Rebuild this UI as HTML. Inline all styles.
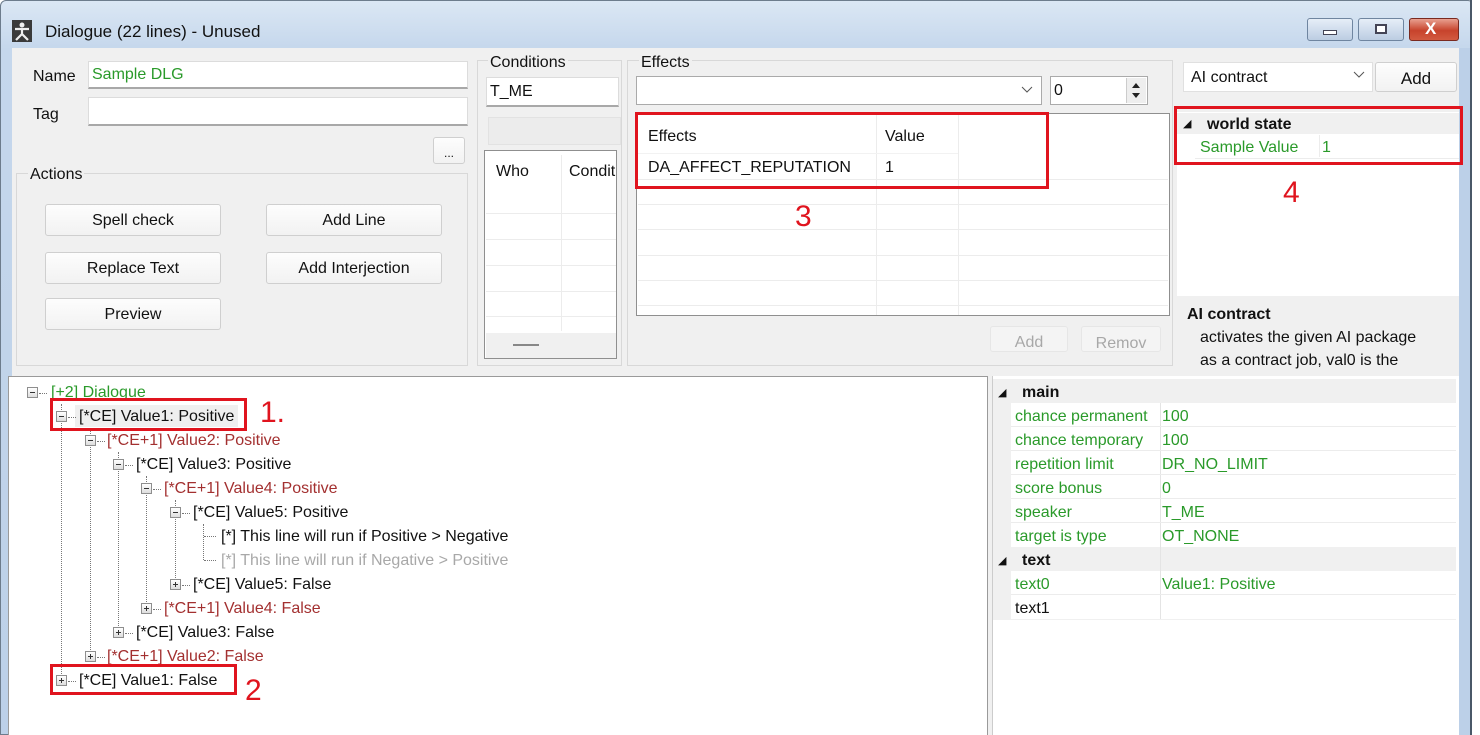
<!DOCTYPE html>
<html><head><meta charset="utf-8"><style>
*{box-sizing:border-box;margin:0;padding:0}
body{width:1480px;height:735px;overflow:hidden;background:#fff;font-family:"Liberation Sans",sans-serif;font-size:16px;color:#111;position:relative}
.a{position:absolute}
.t{position:absolute;white-space:nowrap;line-height:20px}
.tb{position:absolute;background:#fff;border:1px solid #dcdcdc;border-bottom:2px solid #a8a8a8}
.btn{position:absolute;background:linear-gradient(#fdfdfd,#f2f2f2);border:1px solid #cfcfcf;border-radius:3px;text-align:center;line-height:32px;font-size:16px}
.grp{position:absolute;border:1px solid #d8d8d8}
.g{color:#2a9a2a}.r{color:#a33030}.gr{color:#a8a8a8}
.hl{position:absolute;height:1px;background:#ececec}
.vl{position:absolute;width:1px;background:#ececec}
.ex{position:absolute;width:11px;height:11px;border:1px solid #8e8e8e;background:linear-gradient(#fff,#ddd)}
.ex:after{content:"";position:absolute;left:2px;top:4px;width:5px;height:1px;background:#333}
.ex.p:before{content:"";position:absolute;left:4px;top:2px;width:1px;height:5px;background:#333}
.dv{position:absolute;border-left:1px dotted #777;width:0}
.dh{position:absolute;border-top:1px dotted #777;height:0}
.rb{position:absolute;border:3px solid #e0141e}
.num{position:absolute;color:#e0141e;font-size:30px;line-height:30px}
</style></head><body>
<div class="a" style="left:0;top:0;width:1474px;height:735px;background:linear-gradient(#dbe7f4,#c5d7ec 48px,#bcd0e8);border:1px solid #6d7c8c;border-radius:6px 6px 0 0"></div>
<div class="a" style="left:12px;top:20px;width:20px;height:22px;background:#3a3a3a"></div>
<svg class="a" style="left:12px;top:20px" width="20" height="22"><circle cx="10" cy="5" r="2.5" fill="#eee"/><path d="M3 9H17M10 9V14M10 14L4 20M10 14L16 20" stroke="#eee" stroke-width="2.2" fill="none"/></svg>
<div class="t" style="left:45px;top:22px;font-size:17px">Dialogue (22 lines) - Unused</div>
<div class="a" style="left:1307px;top:18px;width:46px;height:23px;border:1px solid #6f85a0;border-radius:3px;background:linear-gradient(#e6eef8,#bccde2)"></div>
<div class="a" style="left:1323px;top:30px;width:14px;height:5px;background:#fff;border:1px solid #445"></div>
<div class="a" style="left:1358px;top:18px;width:46px;height:23px;border:1px solid #6f85a0;border-radius:3px;background:linear-gradient(#e6eef8,#bccde2)"></div>
<div class="a" style="left:1375px;top:24px;width:12px;height:10px;border:2px solid #445;background:#fff"></div>
<div class="a" style="left:1409px;top:18px;width:50px;height:23px;border:1px solid #7a2a20;border-radius:3px;background:linear-gradient(#e8a090,#c7432c 55%,#d25a40)"></div>
<div class="t" style="left:1425px;top:19px;color:#fff;font-weight:bold;font-size:17px">X</div>
<div class="a" style="left:12px;top:48px;width:1447px;height:687px;background:#f0f0f0"></div>
<div class="t" style="left:33px;top:67px">Name</div>
<div class="tb" style="left:88px;top:61px;width:380px;height:28px"></div>
<div class="t g" style="left:92px;top:65px">Sample DLG</div>
<div class="t" style="left:33px;top:105px">Tag</div>
<div class="tb" style="left:88px;top:97px;width:380px;height:29px"></div>
<div class="btn" style="left:433px;top:137px;width:32px;height:27px;line-height:30px;font-size:12px">...</div>
<div class="grp" style="left:16px;top:173px;width:452px;height:193px"></div>
<div class="t" style="left:28px;top:165px;background:#f0f0f0;padding:0 2px">Actions</div>
<div class="btn" style="left:45px;top:204px;width:176px;height:32px">Spell check</div>
<div class="btn" style="left:266px;top:204px;width:176px;height:32px">Add Line</div>
<div class="btn" style="left:45px;top:252px;width:176px;height:32px">Replace Text</div>
<div class="btn" style="left:266px;top:252px;width:176px;height:32px">Add Interjection</div>
<div class="btn" style="left:45px;top:298px;width:176px;height:32px">Preview</div>
<div class="grp" style="left:477px;top:60px;width:145px;height:306px"></div>
<div class="t" style="left:488px;top:53px;background:#f0f0f0;padding:0 2px">Conditions</div>
<div class="tb" style="left:486px;top:77px;width:133px;height:30px"></div>
<div class="t" style="left:490px;top:82px">T_ME</div>
<div class="a" style="left:488px;top:117px;width:133px;height:28px;background:#ececec;border:1px solid #e2e2e2"></div>
<div class="a" style="left:484px;top:150px;width:133px;height:209px;background:#fff;border:1px solid #8f8f8f"></div>
<div class="t" style="left:496px;top:162px">Who</div>
<div class="t" style="left:569px;top:162px">Condit</div>
<div class="vl" style="left:561px;top:155px;height:176px"></div>
<div class="hl" style="left:486px;top:213px;width:130px"></div>
<div class="hl" style="left:486px;top:239px;width:130px"></div>
<div class="hl" style="left:486px;top:265px;width:130px"></div>
<div class="hl" style="left:486px;top:291px;width:130px"></div>
<div class="hl" style="left:486px;top:316px;width:130px"></div>
<div class="a" style="left:486px;top:333px;width:130px;height:25px;background:#f0f0f0"></div>
<div class="a" style="left:513px;top:344px;width:26px;height:2px;background:#888"></div>
<div class="grp" style="left:627px;top:60px;width:546px;height:306px"></div>
<div class="t" style="left:639px;top:53px;background:#f0f0f0;padding:0 2px">Effects</div>
<div class="a" style="left:636px;top:76px;width:406px;height:29px;background:#fff;border:1px solid #aaa"></div>
<svg class="a" style="left:1021px;top:86px" width="12" height="8"><path d="M1 1L6 6L11 1" stroke="#555" fill="none"/></svg>
<div class="a" style="left:1050px;top:76px;width:98px;height:29px;background:#fff;border:1px solid #aaa"></div>
<div class="t" style="left:1054px;top:81px">0</div>
<div class="a" style="left:1126px;top:78px;width:20px;height:25px;background:#eee;border-left:1px solid #ccc"></div>
<svg class="a" style="left:1130px;top:81px" width="12" height="20"><path d="M2 7L6 2L10 7Z M2 12L6 17L10 12Z" fill="#222"/></svg>
<div class="a" style="left:636px;top:113px;width:534px;height:203px;background:#fff;border:1px solid #8f8f8f"></div>
<div class="t" style="left:648px;top:127px">Effects</div>
<div class="t" style="left:885px;top:127px">Value</div>
<div class="t" style="left:648px;top:158px">DA_AFFECT_REPUTATION</div>
<div class="t" style="left:885px;top:158px">1</div>
<div class="vl" style="left:876px;top:115px;height:200px"></div>
<div class="vl" style="left:958px;top:115px;height:200px"></div>
<div class="hl" style="left:638px;top:153px;width:320px;background:#f2f2f2"></div>
<div class="hl" style="left:638px;top:179px;width:530px"></div>
<div class="hl" style="left:638px;top:204px;width:530px"></div>
<div class="hl" style="left:638px;top:229px;width:530px"></div>
<div class="hl" style="left:638px;top:255px;width:530px"></div>
<div class="hl" style="left:638px;top:280px;width:530px"></div>
<div class="hl" style="left:638px;top:305px;width:530px"></div>
<div class="btn" style="left:990px;top:326px;width:78px;height:26px;color:#a8a8a8;border-color:#e6e6e6;background:#f4f4f4;line-height:32px">Add</div>
<div class="btn" style="left:1081px;top:326px;width:80px;height:26px;color:#a8a8a8;border-color:#e6e6e6;background:#f4f4f4;line-height:34px;overflow:hidden">Remov</div>
<div class="a" style="left:1183px;top:62px;width:190px;height:30px;background:#fff;border:1px solid #e0e0e0"></div>
<div class="t" style="left:1191px;top:68px">AI contract</div>
<svg class="a" style="left:1353px;top:71px" width="12" height="8"><path d="M1 1L6 6L11 1" stroke="#555" fill="none"/></svg>
<div class="btn" style="left:1375px;top:62px;width:82px;height:30px;line-height:32px;font-size:17px">Add</div>
<div class="a" style="left:1177px;top:112px;width:283px;height:184px;background:#fff"></div>
<div class="a" style="left:1177px;top:113px;width:283px;height:21px;background:#f0f0f0"></div>
<div class="t" style="left:1183px;top:114px;font-size:11px">◢</div>
<div class="t" style="left:1207px;top:115px;font-weight:bold;font-size:16px">world state</div>
<div class="t g" style="left:1200px;top:138px">Sample Value</div>
<div class="t g" style="left:1322px;top:138px">1</div>
<div class="vl" style="left:1319px;top:135px;height:22px"></div>
<div class="hl" style="left:1195px;top:158px;width:265px"></div>
<div class="t" style="left:1187px;top:305px;font-weight:bold">AI contract</div>
<div class="t" style="left:1200px;top:328px">activates the given AI package</div>
<div class="t" style="left:1200px;top:351px">as a contract job, val0 is the</div>
<div class="a" style="left:8px;top:376px;width:980px;height:359px;background:#fff;border:1px solid #9a9a9a;border-bottom:none"></div>
<div class="a" style="left:992px;top:376px;width:467px;height:359px;background:#fff;border-left:1px solid #ccc"></div>
<div class="dv" style="left:61px;top:404px;height:276px"></div>
<div class="dv" style="left:90px;top:428px;height:228px"></div>
<div class="dv" style="left:118px;top:452px;height:180px"></div>
<div class="dv" style="left:146px;top:476px;height:132px"></div>
<div class="dv" style="left:175px;top:500px;height:84px"></div>
<div class="dv" style="left:203px;top:524px;height:36px"></div>
<div class="dh" style="left:204px;top:536px;width:12px"></div>
<div class="dh" style="left:204px;top:560px;width:12px"></div>
<div class="ex" style="left:27px;top:387px"></div><div class="dh" style="left:39px;top:393px;width:8px"></div>
<div class="t g" style="left:51px;top:383px">[+2] Dialogue</div>
<div class="a" style="left:75px;top:405px;width:163px;height:22px;background:#efefef"></div>
<div class="ex" style="left:56px;top:411px"></div><div class="dh" style="left:68px;top:417px;width:8px"></div>
<div class="t" style="left:79px;top:407px">[*CE] Value1: Positive</div>
<div class="ex" style="left:85px;top:435px"></div><div class="dh" style="left:97px;top:441px;width:8px"></div>
<div class="t r" style="left:107px;top:431px">[*CE+1] Value2: Positive</div>
<div class="ex" style="left:113px;top:459px"></div><div class="dh" style="left:125px;top:465px;width:8px"></div>
<div class="t" style="left:136px;top:455px">[*CE] Value3: Positive</div>
<div class="ex" style="left:141px;top:483px"></div><div class="dh" style="left:153px;top:489px;width:8px"></div>
<div class="t r" style="left:164px;top:479px">[*CE+1] Value4: Positive</div>
<div class="ex" style="left:170px;top:507px"></div><div class="dh" style="left:182px;top:513px;width:8px"></div>
<div class="t" style="left:193px;top:503px">[*CE] Value5: Positive</div>
<div class="t" style="left:221px;top:527px">[*] This line will run if Positive &gt; Negative</div>
<div class="t gr" style="left:221px;top:551px">[*] This line will run if Negative &gt; Positive</div>
<div class="ex p" style="left:170px;top:579px"></div><div class="dh" style="left:182px;top:585px;width:8px"></div>
<div class="t" style="left:193px;top:575px">[*CE] Value5: False</div>
<div class="ex p" style="left:141px;top:603px"></div><div class="dh" style="left:153px;top:609px;width:8px"></div>
<div class="t r" style="left:164px;top:599px">[*CE+1] Value4: False</div>
<div class="ex p" style="left:113px;top:627px"></div><div class="dh" style="left:125px;top:633px;width:8px"></div>
<div class="t" style="left:136px;top:623px">[*CE] Value3: False</div>
<div class="ex p" style="left:85px;top:651px"></div><div class="dh" style="left:97px;top:657px;width:8px"></div>
<div class="t r" style="left:107px;top:647px">[*CE+1] Value2: False</div>
<div class="ex p" style="left:56px;top:675px"></div><div class="dh" style="left:68px;top:681px;width:8px"></div>
<div class="t" style="left:79px;top:671px">[*CE] Value1: False</div>
<div class="a" style="left:993px;top:379px;width:463px;height:241px;background:#f0f0f0"></div>
<div class="a" style="left:1011px;top:403px;width:445px;height:144px;background:#fff"></div>
<div class="a" style="left:1011px;top:571px;width:445px;height:48px;background:#fff"></div>
<div class="vl" style="left:1160px;top:403px;height:216px;background:#e4e4e4"></div>
<div class="hl" style="left:1011px;top:426px;width:445px"></div>
<div class="hl" style="left:1011px;top:450px;width:445px"></div>
<div class="hl" style="left:1011px;top:474px;width:445px"></div>
<div class="hl" style="left:1011px;top:498px;width:445px"></div>
<div class="hl" style="left:1011px;top:522px;width:445px"></div>
<div class="hl" style="left:1011px;top:594px;width:445px"></div>
<div class="t" style="left:998px;top:383px;font-size:11px">◢</div>
<div class="t" style="left:1022px;top:383px;font-weight:bold">main</div>
<div class="t g" style="left:1015px;top:407px;width:143px;overflow:hidden">chance permanent</div>
<div class="t g" style="left:1162px;top:407px">100</div>
<div class="t g" style="left:1015px;top:431px;width:143px;overflow:hidden">chance temporary</div>
<div class="t g" style="left:1162px;top:431px">100</div>
<div class="t g" style="left:1015px;top:455px">repetition limit</div>
<div class="t g" style="left:1162px;top:455px">DR_NO_LIMIT</div>
<div class="t g" style="left:1015px;top:479px">score bonus</div>
<div class="t g" style="left:1162px;top:479px">0</div>
<div class="t g" style="left:1015px;top:503px">speaker</div>
<div class="t g" style="left:1162px;top:503px">T_ME</div>
<div class="t g" style="left:1015px;top:527px">target is type</div>
<div class="t g" style="left:1162px;top:527px">OT_NONE</div>
<div class="t" style="left:998px;top:551px;font-size:11px">◢</div>
<div class="t" style="left:1022px;top:551px;font-weight:bold">text</div>
<div class="t g" style="left:1015px;top:575px">text0</div>
<div class="t g" style="left:1162px;top:575px">Value1: Positive</div>
<div class="t" style="left:1015px;top:599px">text1</div>
<div class="a" style="left:1459px;top:48px;width:11px;height:687px;background:#bcd0e8"></div>
<div class="a" style="left:1470px;top:0;width:2px;height:735px;background:#4a5868"></div>
<div class="a" style="left:1472px;top:0;width:8px;height:735px;background:#fff"></div>
<div class="rb" style="left:635px;top:112px;width:414px;height:77px"></div>
<div class="num" style="left:795px;top:202px">3</div>
<div class="rb" style="left:1174px;top:106px;width:289px;height:59px"></div>
<div class="num" style="left:1283px;top:178px">4</div>
<div class="rb" style="left:50px;top:398px;width:197px;height:33px"></div>
<div class="num" style="left:260px;top:398px">1.</div>
<div class="rb" style="left:50px;top:664px;width:187px;height:31px"></div>
<div class="num" style="left:245px;top:676px">2</div>
</body></html>
